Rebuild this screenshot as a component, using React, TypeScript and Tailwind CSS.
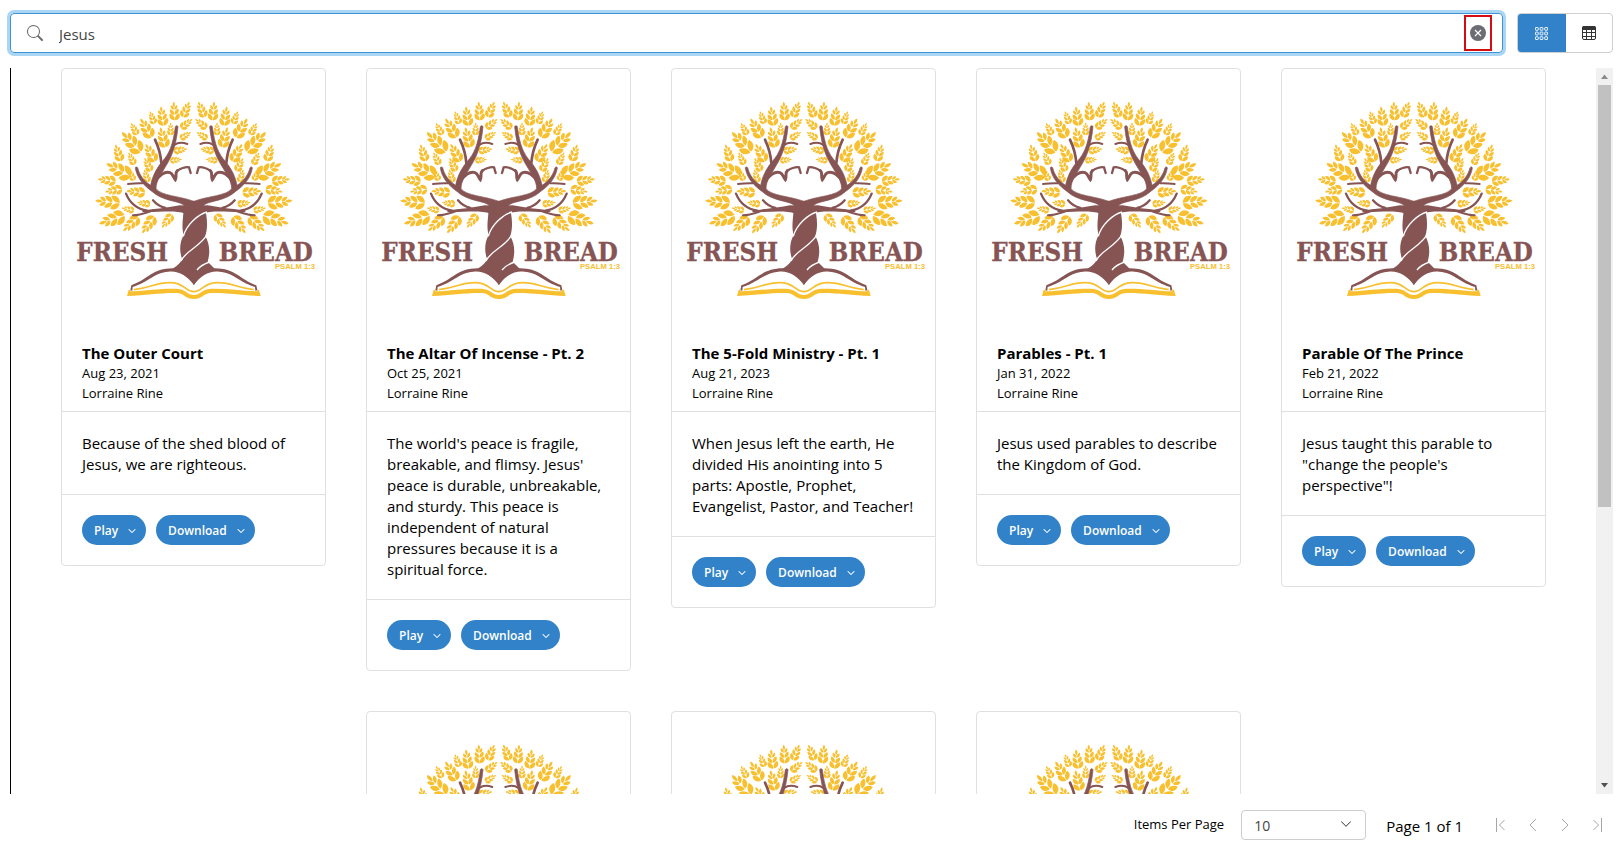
import { useState } from 'react'
import { BsChevronDown, BsSearch } from 'react-icons/bs'

interface Message {
  title: string
  date: string
  speaker: string
  description: string
}

const messages: Message[] = [
  {
    title: 'The Outer Court',
    date: 'Aug 23, 2021',
    speaker: 'Lorraine Rine',
    description: 'Because of the shed blood of Jesus, we are righteous.',
  },
  {
    title: 'The Altar Of Incense - Pt. 2',
    date: 'Oct 25, 2021',
    speaker: 'Lorraine Rine',
    description:
      "The world's peace is fragile, breakable, and flimsy. Jesus' peace is durable, unbreakable, and sturdy. This peace is independent of natural pressures because it is a spiritual force.",
  },
  {
    title: 'The 5-Fold Ministry - Pt. 1',
    date: 'Aug 21, 2023',
    speaker: 'Lorraine Rine',
    description:
      'When Jesus left the earth, He divided His anointing into 5 parts: Apostle, Prophet, Evangelist, Pastor, and Teacher!',
  },
  {
    title: 'Parables - Pt. 1',
    date: 'Jan 31, 2022',
    speaker: 'Lorraine Rine',
    description: 'Jesus used parables to describe the Kingdom of God.',
  },
  {
    title: 'Parable Of The Prince',
    date: 'Feb 21, 2022',
    speaker: 'Lorraine Rine',
    description: 'Jesus taught this parable to "change the people\'s perspective"!',
  },
]

// x, y, rotation, length
const sprigs = [
  [378, 132, 22, 50], [343, 137, -4, 56], [307, 152, -8, 58], [277, 156, -20, 40],
  [379, 174, 50, 44], [376, 209, 58, 38], [332, 190, 0, 38], [309, 216, -14, 62],
  [259, 188, -30, 66], [223, 190, -28, 40], [216, 230, -44, 82], [272, 262, -28, 60],
  [360, 252, 80, 42], [347, 282, 84, 36], [175, 262, -18, 52], [215, 279, -26, 40],
  [264, 297, -26, 44], [259, 331, -16, 40], [215, 328, -24, 36], [178, 313, -62, 82],
  [142, 343, -82, 54], [162, 373, -100, 52], [229, 378, -84, 56], [145, 408, -84, 74],
  [205, 430, -78, 38], [252, 412, -82, 40], [158, 460, -108, 80], [214, 473, -132, 62],
  [266, 475, -144, 62], [322, 464, -142, 50],
]

function Sprig({ x, y, angle, length }: { x: number; y: number; angle: number; length: number }) {
  return (
    <g transform={`translate(${x} ${y}) rotate(${angle}) scale(${length / 60})`}>
      <path d="M0-32C5-27 5-20 0-14C-5-20-5-27 0-32Z" />
      <path d="M1-6C-1-13 4-19 10-21C13-14 9-7 1-6ZM-1-6C1-13-4-19-10-21C-13-14-9-7-1-6Z" />
      <path d="M1 10C-1 1 4-6 13-9C17 0 12 9 1 10ZM-1 10C1 1-4-6-13-9C-17 0-12 9-1 10Z" />
      <path d="M1 28C-1 17 5 9 15 6C20 16 14 27 1 28ZM-1 28C1 17-5 9-15 6C-20 16-14 27-1 28Z" />
    </g>
  )
}

function TreeHalf() {
  return (
    <g>
      <g fill="#f8c02f">
        {sprigs.map(([x, y, angle, length]) => (
          <Sprig key={`${x}-${y}`} x={x} y={y} angle={angle} length={length} />
        ))}
      </g>
      {/* tapered limb running up from the trunk */}
      <path
        fill="#875454"
        stroke="#875454"
        strokeWidth="2"
        d="M402 406C355 389 305 390 288 368C289 342 302 328 314 306C333 276 348 245 354 182C353 178 347 178 346 182C339 237 327 264 307 286C287 310 276 335 272 358C250 344 238 325 233 305C230 301 225 303 226 307C231 336 250 358 277 377C307 405 350 403 370 416L402 438Z"
      />
      <g fill="none" stroke="#875454" strokeLinecap="round">
        <path strokeWidth="8" d="M285 221C294 240 302 266 304 291" />
        <path strokeWidth="6" d="M343 237C355 228 367 229 382 234" />
        <path strokeWidth="9" d="M285 350C295 326 315 316 330 320C339 323 339 333 346 341C351 332 344 321 352 314" />
        <path strokeWidth="7" d="M352 314C364 307 377 302 387 304L392 321" />
        <path strokeWidth="6" d="M204 354C220 354 232 350 247 352" />
        <path strokeWidth="7" d="M198 383C209 410 229 429 262 434" />
        <path strokeWidth="6" d="M219 448C247 448 263 437 286 432" />
        <path strokeWidth="7" d="M279 403C289 415 300 422 316 426" />
      </g>
      <path fill="#875454" d="M246 434C285 429 325 425 360 418L402 420L376 443C344 431 290 440 248 438Z" />
      {/* open book */}
      <path
        fill="#875454"
        d="M211 673L214 658C265 640 278 605 344 607L402 612V657C380 628 354 613 325 617C283 620 269 646 218 663L217 674Z"
      />
      <path fill="none" stroke="#f8c02f" strokeWidth="5" d="M222 671C275 665 285 650 330 650C375 650 374 677 402 677" />
      <path
        fill="#f8c02f"
        d="M201 690L206 672L212 671L211 676C260 674 300 667 350 668C379 670 382 687 402 687V699C376 699 375 684 352 681C300 680 260 688 201 690Z"
      />
    </g>
  )
}

function FreshBreadLogo() {
  return (
    <svg viewBox="6 9 789 789" className="block aspect-square w-full" role="img" aria-label="Fresh Bread, Psalm 1:3">
      <TreeHalf />
      <g transform="translate(803 0) scale(-1 1)">
        <TreeHalf />
      </g>
      <path
        fill="#875454"
        d="M370 418C373 450 362 475 371 507C357 533 359 558 366 578C362 592 349 600 338 608C370 611 390 635 402 657C416 635 437 611 464 608L443 587C451 559 449 535 436 510C445 480 441 452 433 418Z"
      />
      <g fill="none" stroke="#fff" strokeWidth="4">
        <path d="M441 438C414 445 379 477 370 511" />
        <path d="M441 505C425 540 377 553 363 585" />
        <path d="M449 588C431 594 420 600 411 612" />
      </g>
      <g
        fill="#875454"
        stroke="#875454"
        strokeWidth="1"
        fontFamily="'DejaVu Serif Condensed', 'DejaVu Serif', serif"
        fontWeight="700"
        fontSize="77"
      >
        <text x="49" y="584">FRESH</text>
        <text x="476" y="584">BREAD</text>
      </g>
      <text x="765" y="609" textAnchor="end" fill="#f8c02f" fontFamily="'Liberation Sans', sans-serif" fontWeight="700" fontSize="23">
        PSALM 1:3
      </text>
    </svg>
  )
}

function MenuButton({ label }: { label: string }) {
  return (
    <button
      type="button"
      className="flex h-[30px] items-center gap-2.5 rounded-full bg-[#3182c8] pt-px pr-2.5 pl-3 text-xs font-semibold text-white"
    >
      {label}
      <BsChevronDown className="size-2 stroke-1" />
    </button>
  )
}

function MessageCard({ message }: { message: Message }) {
  return (
    <article className="w-[265px] rounded border border-[#dee0e2]">
      <FreshBreadLogo />
      <header className="px-5 pt-3 pb-2 text-[13px] leading-5">
        <h2 className="text-[15px] leading-[19px] font-bold">{message.title}</h2>
        <p>{message.date}</p>
        <p>{message.speaker}</p>
      </header>
      <p className="border-t border-[#dee0e2] px-5 pt-[21px] pb-[19px] text-[15px] leading-[21px]">
        {message.description}
      </p>
      <footer className="flex gap-2.5 border-t border-[#dee0e2] p-5">
        <MenuButton label="Play" />
        <MenuButton label="Download" />
      </footer>
    </article>
  )
}

function GridIcon() {
  return (
    <svg viewBox="0 0 14 14" className="size-[13px]" fill="none" stroke="currentColor" aria-hidden="true">
      {[1, 6, 11].map((y) =>
        [1, 6, 11].map((x) => <rect key={`${x}-${y}`} x={x - 0.5} y={y - 0.5} width="3" height="3" rx="0.5" />)
      )}
    </svg>
  )
}

function TableIcon() {
  return (
    <svg viewBox="0 0 14 14" className="size-3.5" fill="none" stroke="currentColor" aria-hidden="true">
      <rect x="0.5" y="0.5" width="13" height="13" rx="1.5" />
      <path fill="currentColor" stroke="none" d="M0 4V2Q0 0 2 0H12Q14 0 14 2V4Z" />
      <path d="M0 6.5H14M0 10.5H14M4.5 3V14M9.5 3V14" />
    </svg>
  )
}

function PagerButton({ label, d }: { label: string; d: string }) {
  return (
    <button type="button" disabled aria-label={label} className="text-[#a6a6a6]">
      <svg viewBox="0 0 12 14" className="h-3.5 w-3" fill="none" stroke="currentColor">
        <path d={d} />
      </svg>
    </button>
  )
}

function ScrollBar() {
  return (
    <div className="flex w-[17px] shrink-0 flex-col items-center bg-[#f1f1f1]" aria-hidden="true">
      <svg viewBox="0 0 17 17" className="size-[17px] shrink-0">
        <path fill="#8b8b8b" d="M5 11L8.5 6.5L12 11Z" />
      </svg>
      <div className="min-h-0 w-full flex-1 px-0.5">
        <div className="h-[61%] bg-[#c1c1c1]" />
      </div>
      <svg viewBox="0 0 17 17" className="size-[17px] shrink-0">
        <path fill="#505050" d="M5 6L8.5 10.5L12 6Z" />
      </svg>
    </div>
  )
}

export default function App() {
  const [query, setQuery] = useState('Jesus')
  const [view, setView] = useState('cards')
  const [pageSize, setPageSize] = useState('10')

  const results = [...messages, ...messages.slice(1, 4)]

  return (
    <div className="flex h-screen flex-col bg-white pr-[7px] pl-2.5 font-['Open_Sans','Noto_Sans',sans-serif] text-black">
      <div className="flex gap-3.5 pt-[13px] pb-[15px]">
        <div className="flex h-10 flex-1 items-center rounded border border-[#3f93d3] pr-2.5 pl-4 ring-3 ring-[#a9d6f5]">
          <BsSearch className="size-4 text-[#6b6b6b]" />
          <input
            type="text"
            aria-label="Search messages"
            value={query}
            onChange={(e) => setQuery(e.target.value)}
            className="ml-4 min-w-0 flex-1 pt-0.5 text-[15px] text-[#444] outline-none"
          />
          <button
            type="button"
            aria-label="Clear search"
            onClick={() => setQuery('')}
            className="flex h-9 w-7 items-center justify-center border-2 border-[#d40d12]"
          >
            <svg viewBox="0 0 16 16" className="size-4">
              <circle cx="8" cy="8" r="8" fill="#6c6c74" />
              <path d="M5 5L11 11M11 5L5 11" stroke="#fff" strokeWidth="1.2" />
            </svg>
          </button>
        </div>
        <div className="flex h-10 w-24 overflow-hidden rounded border border-[#d0d0d0]">
          <button
            type="button"
            aria-label="Card view"
            aria-pressed={view === 'cards'}
            onClick={() => setView('cards')}
            className="-my-px -ml-px flex w-[49px] items-center justify-center bg-[#3182c8] text-white"
          >
            <GridIcon />
          </button>
          <button
            type="button"
            aria-label="Table view"
            aria-pressed={view === 'table'}
            onClick={() => setView('table')}
            className="flex flex-1 items-center justify-center text-[#333]"
          >
            <TableIcon />
          </button>
        </div>
      </div>

      <main className="flex min-h-0 flex-1">
        <div className="flex min-w-0 flex-1 flex-wrap content-start items-start justify-center gap-10 overflow-hidden border-l border-black">
          {results.map((message, index) => (
            <MessageCard key={index} message={message} />
          ))}
        </div>
        <ScrollBar />
      </main>

      <div className="flex h-[55px] shrink-0 items-center justify-end pt-1.5 pr-2.5">
        <label htmlFor="page-size" className="text-[13px]">
          Items Per Page
        </label>
        <div className="relative ml-[17px]">
          <select
            id="page-size"
            value={pageSize}
            onChange={(e) => setPageSize(e.target.value)}
            className="h-[30px] w-[125px] appearance-none rounded border border-[#cdcdcd] bg-white pt-0.5 pl-3 text-sm text-[#444]"
          >
            <option>10</option>
            <option>25</option>
            <option>50</option>
          </select>
          <BsChevronDown className="pointer-events-none absolute top-2 right-3.5 size-3 text-[#333]" />
        </div>
        <span className="ml-5 pt-1 text-[15px]">Page 1 of 1</span>
        <div className="ml-8 flex gap-5">
          <PagerButton label="First page" d="M1.5 0V14M9.5 2L4.5 7L9.5 12" />
          <PagerButton label="Previous page" d="M9 1L3 7L9 13" />
          <PagerButton label="Next page" d="M3 1L9 7L3 13" />
          <PagerButton label="Last page" d="M10.5 0V14M2.5 2L7.5 7L2.5 12" />
        </div>
      </div>
    </div>
  )
}
